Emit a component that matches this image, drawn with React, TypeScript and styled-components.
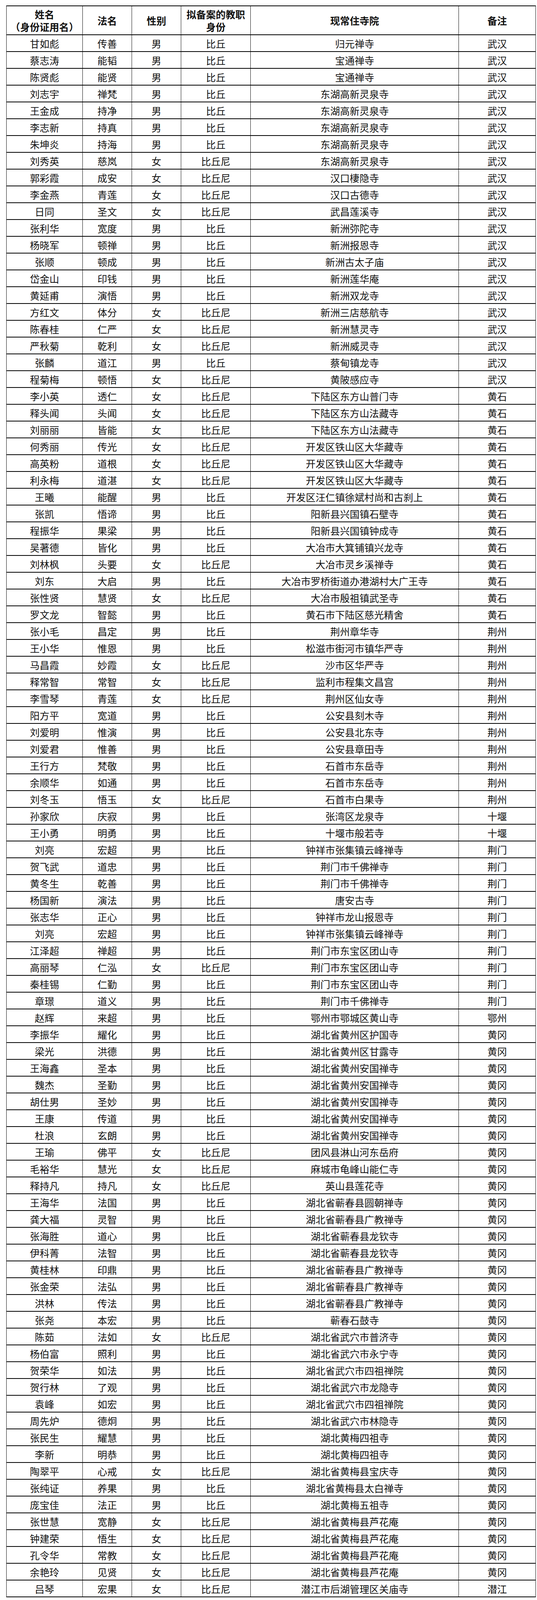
import styled, { createGlobalStyle } from "styled-components";

const GlobalStyle = createGlobalStyle`
    html, body {
        margin: 0;
        padding: 0;
        background: #ffffff;
    }
    body {
        font-family: "Noto Sans CJK SC", "Noto Sans", sans-serif;
        color: #000000;
    }
`;

const COLUMNS = "195px 126px 126px 178px 533px 197px";

// 姓名,法名,性别,现常住寺院,备注 — the 教职身份 follows from 性别
const RAW = `甘如彪,传善,男,归元禅寺,武汉
蔡志涛,能韬,男,宝通禅寺,武汉
陈贤彪,能贤,男,宝通禅寺,武汉
刘志宇,禅梵,男,东湖高新灵泉寺,武汉
王金成,持净,男,东湖高新灵泉寺,武汉
李志新,持真,男,东湖高新灵泉寺,武汉
朱坤炎,持海,男,东湖高新灵泉寺,武汉
刘秀英,慈岚,女,东湖高新灵泉寺,武汉
郭彩霞,成安,女,汉口棲隐寺,武汉
李金燕,青莲,女,汉口古德寺,武汉
日同,圣文,女,武昌莲溪寺,武汉
张利华,宽度,男,新洲弥陀寺,武汉
杨晓军,顿禅,男,新洲报恩寺,武汉
张顺,顿成,男,新洲古太子庙,武汉
岱金山,印钱,男,新洲莲华庵,武汉
黄延甫,演悟,男,新洲双龙寺,武汉
方红文,体分,女,新洲三店慈航寺,武汉
陈春桂,仁严,女,新洲慧灵寺,武汉
严秋菊,乾利,女,新洲威灵寺,武汉
张麟,道江,男,蔡甸镇龙寺,武汉
程菊梅,顿悟,女,黄陂感应寺,武汉
李小英,透仁,女,下陆区东方山普门寺,黄石
释头闻,头闻,女,下陆区东方山法藏寺,黄石
刘丽丽,皆能,女,下陆区东方山法藏寺,黄石
何秀丽,传光,女,开发区铁山区大华藏寺,黄石
高英粉,道根,女,开发区铁山区大华藏寺,黄石
利永梅,道湛,女,开发区铁山区大华藏寺,黄石
王曦,能醒,男,开发区汪仁镇徐斌村尚和古刹上,黄石
张凯,悟谛,男,阳新县兴国镇石壁寺,黄石
程振华,果梁,男,阳新县兴国镇钟成寺,黄石
吴著德,皆化,男,大冶市大箕铺镇兴龙寺,黄石
刘林枫,头要,女,大冶市灵乡溪禅寺,黄石
刘东,大启,男,大冶市罗桥街道办港湖村大广王寺,黄石
张性贤,慧贤,女,大冶市殷祖镇武圣寺,黄石
罗文龙,智懿,男,黄石市下陆区慈光精舍,黄石
张小毛,昌定,男,荆州章华寺,荆州
王小华,惟恩,男,松滋市街河市镇华严寺,荆州
马昌霞,妙霞,女,沙市区华严寺,荆州
释常智,常智,女,监利市程集文昌宫,荆州
李雪琴,青莲,女,荆州区仙女寺,荆州
阳方平,宽道,男,公安县刻木寺,荆州
刘爱明,惟演,男,公安县北东寺,荆州
刘爱君,惟善,男,公安县章田寺,荆州
王行方,梵敬,男,石首市东岳寺,荆州
余顺华,如通,男,石首市东岳寺,荆州
刘冬玉,悟玉,女,石首市白果寺,荆州
孙家欣,庆寂,男,张湾区龙泉寺,十堰
王小勇,明勇,男,十堰市般若寺,十堰
刘亮,宏超,男,钟祥市张集镇云峰禅寺,荆门
贺飞武,道忠,男,荆门市千佛禅寺,荆门
黄冬生,乾善,男,荆门市千佛禅寺,荆门
杨国新,演法,男,唐安古寺,荆门
张志华,正心,男,钟祥市龙山报恩寺,荆门
刘亮,宏超,男,钟祥市张集镇云峰禅寺,荆门
江泽超,禅超,男,荆门市东宝区团山寺,荆门
高丽琴,仁泓,女,荆门市东宝区团山寺,荆门
秦桂锡,仁勤,男,荆门市东宝区团山寺,荆门
章璟,道义,男,荆门市千佛禅寺,荆门
赵辉,来超,男,鄂州市鄂城区黄山寺,鄂州
李振华,耀化,男,湖北省黄州区护国寺,黄冈
梁光,洪德,男,湖北省黄州区甘露寺,黄冈
王海鑫,圣本,男,湖北省黄州安国禅寺,黄冈
魏杰,圣勤,男,湖北省黄州安国禅寺,黄冈
胡仕男,圣妙,男,湖北省黄州安国禅寺,黄冈
王康,传道,男,湖北省黄州安国禅寺,黄冈
杜浪,玄朗,男,湖北省黄州安国禅寺,黄冈
王瑜,佛平,女,团风县淋山河东岳府,黄冈
毛裕华,慧光,女,麻城市龟峰山能仁寺,黄冈
释持凡,持凡,女,英山县莲花寺,黄冈
王海华,法国,男,湖北省蕲春县圆朝禅寺,黄冈
龚大福,灵智,男,湖北省蕲春县广教禅寺,黄冈
张海胜,道心,男,湖北省蕲春县龙钦寺,黄冈
伊科菁,法智,男,湖北省蕲春县龙钦寺,黄冈
黄桂林,印鼎,男,湖北省蕲春县广教禅寺,黄冈
张金荣,法弘,男,湖北省蕲春县广教禅寺,黄冈
洪林,传法,男,湖北省蕲春县广教禅寺,黄冈
张尧,本宏,男,蕲春石鼓寺,黄冈
陈茹,法如,女,湖北省武穴市普济寺,黄冈
杨伯富,照利,男,湖北省武穴市永宁寺,黄冈
贺荣华,如法,男,湖北省武穴市四祖禅院,黄冈
贺行林,了观,男,湖北省武穴市龙隐寺,黄冈
袁峰,如宏,男,湖北省武穴市四祖禅院,黄冈
周先炉,德炯,男,湖北省武穴市林隐寺,黄冈
张民生,耀慧,男,湖北黄梅四祖寺,黄冈
李新,明恭,男,湖北黄梅四祖寺,黄冈
陶翠平,心戒,女,湖北省黄梅县宝庆寺,黄冈
张纯证,养果,男,湖北省黄梅县太白禅寺,黄冈
庞宝佳,法正,男,湖北黄梅五祖寺,黄冈
张世慧,宽静,女,湖北省黄梅县芦花庵,黄冈
钟建荣,悟生,女,湖北省黄梅县芦花庵,黄冈
孔令华,常教,女,湖北省黄梅县芦花庵,黄冈
余艳玲,见贤,女,湖北省黄梅县芦花庵,黄冈
吕琴,宏果,女,潜江市后湖管理区关庙寺,潜江`;

const rows = RAW.split("\n").map((line) => {
    const [name, dharma, gender, temple, region] = line.split(",");
    return { name, dharma, gender, role: gender === "女" ? "比丘尼" : "比丘", temple, region };
});

const Page = styled.div`
    padding: 14px 0 7px 16px;
    background: #ffffff;
`;

const Table = styled.div`
    width: 1355px;
    border-top: 2px solid #000;
    border-left: 1px solid #111;
`;

const Row = styled.div<{ $head?: boolean }>`
    display: grid;
    grid-template-columns: ${COLUMNS};
    height: ${({ $head }) => ($head ? "74px" : "43px")};
    box-sizing: border-box;
    border-bottom: 2px solid #000;
`;

const Cell = styled.div<{ $head?: boolean }>`
    display: flex;
    align-items: center;
    justify-content: center;
    text-align: center;
    border-right: 1px solid #111;
    font-size: 25px;
    line-height: ${({ $head }) => ($head ? "32px" : "28px")};
    font-weight: ${({ $head }) => ($head ? 700 : 400)};
    color: #111;
    white-space: nowrap;
    overflow: hidden;
`;

const headers = [
    <>姓名<br />（身份证用名）</>,
    "法名",
    "性别",
    <>拟备案的教职<br />身份</>,
    "现常住寺院",
    "备注",
];

export default function App() {
    return (
        <>
            <GlobalStyle />
            <Page>
                <Table>
                    <Row $head>
                        {headers.map((h, i) => (
                            <Cell $head key={i}>{h}</Cell>
                        ))}
                    </Row>
                    {rows.map((r, i) => (
                        <Row key={i}>
                            <Cell>{r.name}</Cell>
                            <Cell>{r.dharma}</Cell>
                            <Cell>{r.gender}</Cell>
                            <Cell>{r.role}</Cell>
                            <Cell>{r.temple}</Cell>
                            <Cell>{r.region}</Cell>
                        </Row>
                    ))}
                </Table>
            </Page>
        </>
    );
}
